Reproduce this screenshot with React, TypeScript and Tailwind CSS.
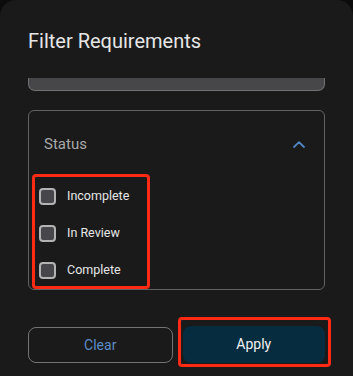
import { useState } from 'react'

const options = ['Incomplete', 'In Review', 'Complete']

const Checkbox = ({ label, checked, onToggle }) => {
  return (
    <label className="flex h-[37px] items-center gap-[11px] pl-[10px] cursor-pointer">
      <span
        onClick={onToggle}
        className={`w-[17px] h-[17px] rounded-[4px] border-2 border-[#b3b3b3] ${checked ? 'bg-[#4f87c5]' : 'bg-[#47474b]'}`}
      ></span>
      <span className="text-[12.5px] text-[#e6e6e6]">{label}</span>
    </label>
  )
}

export default function App() {
  const [checked, setChecked] = useState({})
  const [open, setOpen] = useState(true)

  const toggle = (name) => {
    setChecked({ ...checked, [name]: !checked[name] })
  }

  return (
    <div className="relative w-[353px] h-[376px] bg-[#0c0c0c] overflow-hidden font-['Roboto',sans-serif]">
      <div className="flex flex-col h-full rounded-t-[16px] bg-[#1a1a1a]">
        <div className="h-[78px] px-[28px] pt-[29px]">
          <h2 className="text-[20px] leading-[24px] text-[#e6e6e6]">Filter Requirements</h2>
        </div>

        <div className="h-[233px] overflow-hidden px-[28px]">
          <div className="h-[13px] rounded-b-[7px] bg-[#47474a] border-x border-b border-[#707070]"></div>

          <div className="mt-[19px] h-[180px] rounded-[6px] border-[1.5px] border-[#626262]">
            <button
              onClick={() => setOpen(!open)}
              className="flex w-full h-[66px] items-center justify-between pl-[15px] pr-[19px]"
            >
              <span className="text-[15px] text-[#a9a9a9]">Status</span>
              <svg width="12" height="7" viewBox="0 0 12 7" fill="none">
                <polyline
                  points="1,6 6,1.2 11,6"
                  stroke="#4f87c5"
                  strokeWidth="1.8"
                  strokeLinecap="round"
                  strokeLinejoin="round"
                />
              </svg>
            </button>
            {open && (
              <div className="flex flex-col pt-[1px]">
                {options.map((o) => (
                  <Checkbox key={o} label={o} checked={checked[o]} onToggle={() => toggle(o)} />
                ))}
              </div>
            )}
          </div>
        </div>

        <div className="flex gap-[10px] px-[28px] pt-[16px] pb-[13px]">
          <button
            onClick={() => setChecked({})}
            className="flex-1 h-[36px] rounded-[8px] border-[1.5px] border-[#737373] text-[14px] text-[#5b8bc4]"
          >
            Clear
          </button>
          <button className="flex-1 h-[37px] -mt-[1px] rounded-[8px] bg-[#062c40] text-[14px] text-[#f2f2f2]">
            Apply
          </button>
        </div>
      </div>

      {/* highlight marks */}
      <div className="absolute left-[32px] top-[174px] w-[118px] h-[115px] rounded-[4px] border-[3px] border-[#ff2a14] pointer-events-none"></div>
      <div className="absolute left-[178px] top-[317px] w-[153px] h-[50px] rounded-[4px] border-[3px] border-[#ff2a14] pointer-events-none"></div>
    </div>
  )
}
